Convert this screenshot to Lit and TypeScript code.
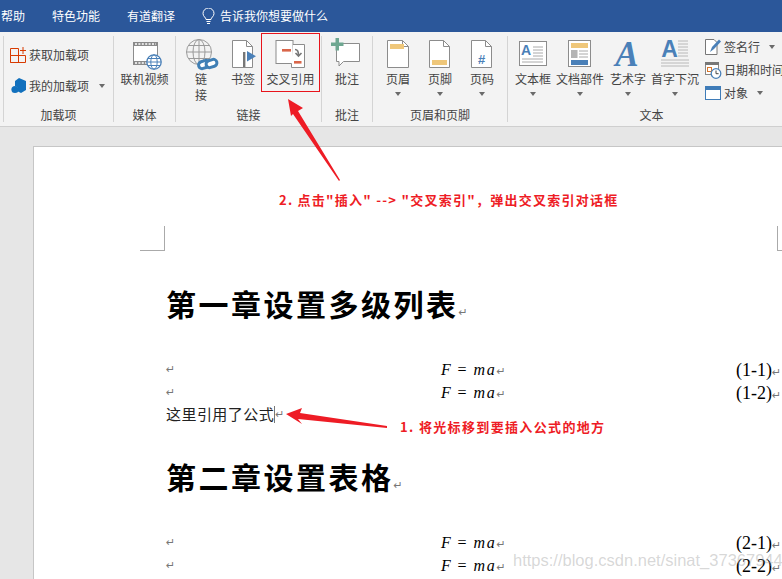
import { LitElement, html, css, svg, TemplateResult } from "lit";
import { customElement } from "lit/decorators.js";

const GRAY = "#8c8c8c";
const BLUE = "#4a80b8";
const YEL = "#efc77a";
const ORG = "#d9664a";

const big = (body: TemplateResult) =>
  html`<svg class="big" width="36" height="34" viewBox="0 0 36 34">${body}</svg>`;
const small = (body: TemplateResult) =>
  html`<svg class="small" width="18" height="18" viewBox="0 0 18 18">${body}</svg>`;

const pageShape = (x: number, y: number, w: number, h: number) =>
  svg`<path d="M${x + 0.5} ${y + 0.5}H${x + w - 6.5}L${x + w - 0.5} ${y + 6.5}V${y + h - 0.5}H${x + 0.5}Z" fill="#fff" stroke="${GRAY}"/><path d="M${x + w - 6.5} ${y + 0.5}V${y + 6.5}H${x + w - 0.5}" fill="none" stroke="${GRAY}"/>`;

const icons: Record<string, () => TemplateResult> = {
  film: () => big(svg`
    <rect x="6.500" y="6.500" width="24" height="22" fill="#fff" stroke="${GRAY}"/>
    <rect x="6" y="6" width="25" height="4" fill="#8a8a8a"/>
    <rect x="6" y="25" width="25" height="4" fill="#8a8a8a"/>
    <path d="M8 8h21M8 27h12" stroke="#fff" stroke-width="1.400" stroke-dasharray="2 1.400"/>
    <circle cx="27" cy="26" r="7.200" fill="#fff" stroke="${BLUE}" stroke-width="1.300"/>
    <ellipse cx="27" cy="26" rx="3.200" ry="7.200" fill="none" stroke="${BLUE}"/>
    <path d="M20 26h14M21 22.500h12M21 29.500h12" stroke="${BLUE}"/>`),
  link: () => big(svg`
    <g fill="none" stroke="#9a9a9a">
      <circle cx="16" cy="16" r="12.500"/>
      <ellipse cx="16" cy="16" rx="6" ry="12.500"/>
      <path d="M16 3.500v25M3.500 16h25M5.500 9.500h21M5.500 22.500h21"/>
    </g>
    <g fill="#fff" stroke="#3f7fb5" stroke-width="3">
      <rect x="15.500" y="25" width="11" height="7" rx="3.500" transform="rotate(-18 21 28.500)"/>
      <rect x="23" y="24" width="11" height="7" rx="3.500" transform="rotate(-18 28.500 27.500)"/>
    </g>`),
  bookmark: () => big(svg`
    ${pageShape(7, 4, 21, 28)}
    <rect x="18" y="16" width="2.400" height="15" fill="#777"/>
    <path d="M22 15l9 5.200-9 5.200Z" fill="${BLUE}"/>`),
  cross: () => big(svg`
    <rect x="3" y="4.500" width="17" height="23" fill="#fff" stroke="${GRAY}"/>
    <path d="M20 8.500h11.500v23h-13V27.500" fill="#fff" stroke="${GRAY}"/>
    <rect x="9" y="13" width="9" height="2.600" fill="${ORG}"/>
    <rect x="21" y="25" width="7.500" height="2.600" fill="${ORG}"/>
    <path d="M22 13.500c3 0 3.500 2 3.500 5.500M22.500 17l3 3 3-3" fill="none" stroke="#777" stroke-width="1.600"/>`),
  comment: () => big(svg`
    <path d="M7.500 7.500H30.500V25.500H14.500L10 30V25.500H7.500Z" fill="#fff" stroke="${GRAY}"/>
    <path d="M2 6.500H6.500V2H10V6.500H14.500V10H10V14.500H6.500V10H2Z" fill="#6ea791"/>`),
  header: () => big(svg`${pageShape(7, 4, 22, 28)}<rect x="10" y="8" width="14" height="5" fill="${YEL}"/>`),
  footer: () => big(svg`${pageShape(7, 4, 21, 28)}<rect x="10" y="24" width="15" height="5" fill="${YEL}"/>`),
  pagenum: () => big(svg`${pageShape(7, 4, 21, 28)}<text x="17.500" y="28" text-anchor="middle" class="hash">#</text>`),
  textbox: () => big(svg`
    <rect x="4.500" y="5.500" width="27" height="24" fill="#fff" stroke="${GRAY}"/>
    <text x="11" y="19" text-anchor="middle" class="a1">A</text>
    <path d="M18 11h10M18 14h10M18 17h10M18 20h10M7 23h21M7 26h21" stroke="#aaa"/>`),
  parts: () => big(svg`
    <rect x="6.500" y="4.500" width="22" height="26" fill="#fff" stroke="${GRAY}"/>
    <rect x="9" y="7" width="17" height="5" fill="${YEL}"/>
    <rect x="9" y="14" width="6.500" height="8" fill="#b4b4b4"/>
    <path d="M17 15h9M17 18h9M17 21h9" stroke="#aaa"/>
    <rect x="9" y="24" width="17" height="5" fill="${BLUE}"/>`),
  wordart: () => big(svg`<text x="17" y="30" text-anchor="middle" class="art">A</text>`),
  dropcap: () => big(svg`
    <text x="12.500" y="21" text-anchor="middle" class="drop">A</text>
    <path d="M21 5h10M21 8h10M21 11h10M21 14h10M21 17h10M21 20h10M4 24h28M4 27h28M4 30h28" stroke="#b8b8b8"/>`),
  getaddin: () => small(svg`
    <path d="M.5 2.500H8.500V16.500M.5 2.500V9.500M.5 9.500H15.500V16.500H.5ZM.5 9.500V16.500" fill="none" stroke="#d83b01"/>
    <path d="M10 4.500H16M13 1V8" stroke="#d83b01"/>`),
  myaddin: () => small(svg`
    <path d="M9 1l7 3v9l-5 3-3-1.500V10.500L5 9V4Z" fill="#1170bd"/>
    <circle cx="5" cy="12.500" r="3.600" fill="#1170bd"/>`),
  signature: () => small(svg`
    <path d="M1.500 1.500H10L13 4.500V16.500H1.500Z" fill="#fff" stroke="#777"/>
    <path d="M6 14l2-5 7-7.500 2 2L10 11Z" fill="${BLUE}"/>`),
  date: () => small(svg`
    <rect x="1.500" y="1.500" width="13" height="12" fill="#fff" stroke="#888"/>
    <rect x="1" y="1" width="14" height="3" fill="#777"/>
    <rect x="3.500" y="6.500" width="4" height="4" fill="#fff" stroke="#d9762a"/>
    <circle cx="12" cy="12.500" r="4.800" fill="#fff" stroke="${BLUE}" stroke-width="1.300"/>
    <path d="M12 9.500v3.200h2.600" fill="none" stroke="#444"/>`),
  object: () => small(svg`
    <rect x="1.500" y="2.500" width="15" height="13" fill="#fff" stroke="#3f7cb8"/>
    <rect x="1" y="2" width="16" height="4" fill="#3f7cb8"/>`),
};

@customElement("app-root")
export class AppRoot extends LitElement {
  static styles = css`
    :host {
      display: block;
      position: relative;
      width: 782px;
      height: 579px;
      overflow: hidden;
      background: #e6e6e6;
      font-family: "Noto Sans CJK SC", "Liberation Sans", sans-serif;
    }
    .tabs {
      height: 32px;
      background: #2b579a;
      color: #fff;
      font-size: 12px;
      display: flex;
      align-items: center;
      gap: 27px;
      padding-left: 1px;
      box-sizing: border-box;
      padding-bottom: 1px;
    }
    .tell {
      display: flex;
      align-items: center;
      gap: 5px;
    }
    .ribbon {
      height: 95px;
      box-sizing: border-box;
      background: #f3f3f3;
      border-bottom: 1px solid #cfcfcf;
      padding: 4px 0 0 3px;
      display: flex;
      align-items: flex-start;
      color: #444;
      font-size: 12px;
      line-height: 16px;
    }
    .group {
      flex: none;
      height: 86px;
      box-sizing: border-box;
      border-left: 1px solid #d4d4d4;
      display: flex;
      flex-direction: column;
    }
    .g1 { width: 110px; }
    .g2 { width: 62px; }
    .g3 { width: 146px; }
    .g4 { width: 51px; }
    .g5 { width: 135px; }
    .g6 { width: 288px; }
    .body {
      height: 70px;
      flex: none;
      display: flex;
      align-items: flex-start;
    }
    .g1 .body { flex-direction: column; padding: 3px 0 0 6px; box-sizing: border-box; }
    .g2 .body, .g4 .body { justify-content: center; }
    .g3 .body { padding-left: 5px; }
    .g5 .body { padding-left: 4px; }
    .g6 .body { padding-left: 2px; }
    .glabel {
      text-align: center;
      height: 14px;
      margin-top: 1px;
      white-space: nowrap;
    }
    .btn {
      flex: none;
      display: flex;
      flex-direction: column;
      align-items: center;
      position: relative;
    }
    .btn.shift { padding-left: 4px; box-sizing: border-box; }
    .big { display: block; overflow: visible; flex: none; }
    .small { display: block; overflow: visible; flex: none; }
    .text { text-align: center; margin-top: 1px; white-space: nowrap; }
    .narrow { width: 14px; white-space: normal; }
    .btn.hit::before {
      content: "";
      position: absolute;
      left: 0;
      right: 0;
      top: -3px;
      height: 59px;
      box-sizing: border-box;
      border: 1px solid #e8141c;
    }
    .caret {
      width: 0;
      height: 0;
      border: 3px solid transparent;
      border-top: 4px solid #6a6a6a;
      border-bottom: 0;
      flex: none;
    }
    .btn .caret { margin-top: 5px; }
    .row {
      height: 31px;
      display: flex;
      align-items: center;
      gap: 1px;
    }
    .row .caret { margin-left: 9px; }
    .col2 {
      display: flex;
      flex-direction: column;
      margin: -1px 0 0 6px;
    }
    .col2 .row { height: 23px; gap: 2px; white-space: nowrap; }
    .col2 .row .caret { margin-left: 7px; }
    .hash { font: bold 13px "Liberation Sans", sans-serif; fill: #4a80b8; }
    .a1 { font: bold 14px "Liberation Sans", sans-serif; fill: #4a80b8; }
    .art { font: italic bold 35px "Liberation Serif", serif; fill: #4a80b8; }
    .drop { font: bold 23px "Liberation Sans", sans-serif; fill: #4a80b8; }

    .work { padding: 19px 0 0 33px; height: 452px; box-sizing: border-box; overflow: hidden; }
    .page {
      width: 900px;
      height: 600px;
      box-sizing: border-box;
      background: #fff;
      border: 1px solid #c6c6c6;
      padding-top: 79px;
      color: #000;
    }
    .marks {
      display: flex;
      justify-content: space-between;
      margin-left: 106px;
      width: 662px;
    }
    .mark {
      width: 25px;
      height: 25px;
      box-sizing: border-box;
      border-bottom: 1px solid #aaa;
    }
    .mark.l { border-right: 1px solid #aaa; }
    .mark.r { border-left: 1px solid #aaa; }
    .content { margin-left: 132px; }
    h1 {
      margin: 30px 0 0;
      font-size: 30px;
      line-height: 44px;
      font-weight: 700;
      letter-spacing: 2.5px;
      white-space: nowrap;
    }
    h1.second { margin-top: 29px; }
    .pm {
      font: 11px "DejaVu Sans", sans-serif;
      color: #777;
      letter-spacing: 0;
      font-weight: 400;
    }
    .eqs { margin: 33px 0 -1px; }
    .eq {
      display: grid;
      grid-template-columns: 275px 295px auto;
      height: 23px;
      line-height: 23px;
      align-items: center;
    }
    .formula {
      font: italic 16px "Liberation Serif", serif;
      letter-spacing: 1.8px;
      white-space: nowrap;
    }
    .formula b { font-weight: 400; font-style: normal; padding: 0 5px; }
    .num { font: 18px "Liberation Serif", serif; white-space: nowrap; padding-top: 2px; }
    .para {
      height: 22px;
      line-height: 22px;
      font-size: 15px;
      letter-spacing: 0.45px;
      white-space: nowrap;
      color: #222;
      display: flex;
      align-items: center;
    }
    .cursor {
      width: 1px;
      height: 17px;
      background: #777;
      flex: none;
    }
    .arrows { position: absolute; left: 0; top: 0; pointer-events: none; }
    .note {
      position: absolute;
      color: #ee1c25;
      font-weight: 700;
      font-size: 13px;
      line-height: 18px;
      white-space: nowrap;
    }
    .n1 { left: 400px; top: 418px; letter-spacing: 1.35px; }
    .n2 { left: 279px; top: 191px; letter-spacing: 1.25px; }
    .wm {
      position: absolute;
      left: 513px;
      top: 550px;
      font: 16.5px/20px "Liberation Sans", sans-serif;
      color: rgba(160, 160, 160, 0.42);
      white-space: nowrap;
    }
  `;

  private btn(label: unknown, icon: string, w: number, caret = false, cls = "") {
    return html`<div class="btn ${cls}" style="width:${w}px">
      ${icons[icon]()}
      <div class="text">${label}</div>
      ${caret ? html`<div class="caret"></div>` : ""}
    </div>`;
  }

  private eq(num: string) {
    return html`<div class="eq">
      <span class="pm">↵</span>
      <span class="formula">F<b>=</b>ma<span class="pm">↵</span></span>
      <span class="num">${num}<span class="pm">↵</span></span>
    </div>`;
  }

  render() {
    return html`
      <div class="tabs">
        <span>帮助</span><span>特色功能</span><span>有道翻译</span>
        <span class="tell">
          <svg width="13" height="16" viewBox="0 0 13 16">
            <path d="M4 11.500C4 9.500 1 8.500 1 5.500a5.500 5.500 0 0 1 11 0C12 8.500 9 9.500 9 11.500Z" fill="none" stroke="#fff"/>
            <path d="M4.500 13.500h4M5 15.500h3" stroke="#fff"/>
          </svg>
          告诉我你想要做什么
        </span>
      </div>
      <div class="ribbon">
        <div class="group g1">
          <div class="body">
            <div class="row">${icons.getaddin()}<span>获取加载项</span></div>
            <div class="row">${icons.myaddin()}<span>我的加载项</span><div class="caret"></div></div>
          </div>
          <div class="glabel">加载项</div>
        </div>
        <div class="group g2">
          <div class="body">${this.btn("联机视频", "film", 52)}</div>
          <div class="glabel">媒体</div>
        </div>
        <div class="group g3">
          <div class="body">
            ${this.btn(html`<div class="narrow">链接</div>`, "link", 40)}
            ${this.btn("书签", "bookmark", 40, false, "shift")}
            ${this.btn("交叉引用", "cross", 59, false, "hit")}
          </div>
          <div class="glabel">链接</div>
        </div>
        <div class="group g4">
          <div class="body">${this.btn("批注", "comment", 40)}</div>
          <div class="glabel">批注</div>
        </div>
        <div class="group g5">
          <div class="body">
            ${this.btn("页眉", "header", 42, true)}
            ${this.btn("页脚", "footer", 42, true)}
            ${this.btn("页码", "pagenum", 42, true)}
          </div>
          <div class="glabel">页眉和页脚</div>
        </div>
        <div class="group g6">
          <div class="body">
            ${this.btn("文本框", "textbox", 46, true)}
            ${this.btn("文档部件", "parts", 48, true)}
            ${this.btn("艺术字", "wordart", 48, true)}
            ${this.btn("首字下沉", "dropcap", 46, true)}
            <div class="col2">
              <div class="row">${icons.signature()}<span>签名行</span><div class="caret"></div></div>
              <div class="row">${icons.date()}<span>日期和时间</span></div>
              <div class="row">${icons.object()}<span>对象</span><div class="caret"></div></div>
            </div>
          </div>
          <div class="glabel">文本</div>
        </div>
      </div>
      <div class="work">
        <div class="page">
          <div class="marks"><div class="mark l"></div><div class="mark r"></div></div>
          <div class="content">
            <h1>第一章设置多级列表<span class="pm">↵</span></h1>
            <div class="eqs">${this.eq("(1-1)")}${this.eq("(1-2)")}</div>
            <div class="para">这里引用了公式<span class="cursor"></span><span class="pm">↵</span></div>
            <h1 class="second">第二章设置表格<span class="pm">↵</span></h1>
            <div class="eqs">${this.eq("(2-1)")}${this.eq("(2-2)")}</div>
          </div>
        </div>
      </div>
      <svg class="arrows" width="782" height="579" viewBox="0 0 782 579">
        <path d="M288 99L303 108L298 111L340 180L339 181L293 114L291 116Z" fill="#ee1c25"/>
        <path d="M286 414L302 408L300 413L387 426L387 428L298 419L302 424Z" fill="#ee1c25"/>
      </svg>
      <div class="note n1">1. 将光标移到要插入公式的地方</div>
      <div class="note n2">2. 点击"插入" --> "交叉索引"，弹出交叉索引对话框</div>
      <div class="wm">https://blog.csdn.net/sinat_37367944</div>
    `;
  }
}
